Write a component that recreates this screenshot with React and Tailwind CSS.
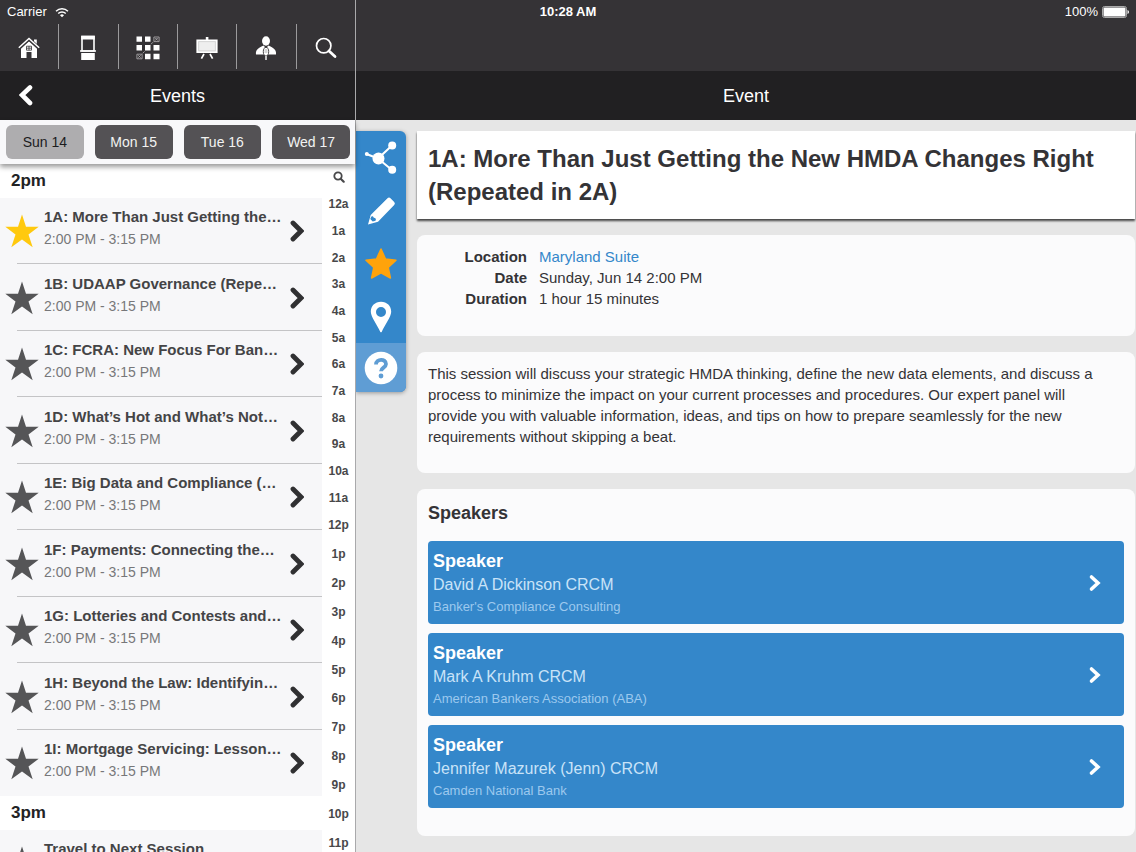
import { useState } from 'react';

const DAYS = ['Sun 14', 'Mon 15', 'Tue 16', 'Wed 17'];

const AM_HOURS = ['12a', '1a', '2a', '3a', '4a', '5a', '6a', '7a', '8a', '9a', '10a', '11a'];
const PM_HOURS = ['12p', '1p', '2p', '3p', '4p', '5p', '6p', '7p', '8p', '9p', '10p', '11p'];

const SECTIONS = [
  {
    label: '2pm',
    events: [
      { title: '1A: More Than Just Getting the…', time: '2:00 PM - 3:15 PM', starred: true },
      { title: '1B: UDAAP Governance (Repe…', time: '2:00 PM - 3:15 PM' },
      { title: '1C: FCRA: New Focus For Ban…', time: '2:00 PM - 3:15 PM' },
      { title: '1D: What’s Hot and What’s Not…', time: '2:00 PM - 3:15 PM' },
      { title: '1E: Big Data and Compliance (…', time: '2:00 PM - 3:15 PM' },
      { title: '1F: Payments: Connecting the…', time: '2:00 PM - 3:15 PM' },
      { title: '1G: Lotteries and Contests and…', time: '2:00 PM - 3:15 PM' },
      { title: '1H: Beyond the Law: Identifyin…', time: '2:00 PM - 3:15 PM' },
      { title: '1I: Mortgage Servicing: Lesson…', time: '2:00 PM - 3:15 PM' },
    ],
  },
  {
    label: '3pm',
    events: [{ title: 'Travel to Next Session', time: '3:15 PM - 3:30 PM' }],
  },
];

const SPEAKERS = [
  { name: 'David A Dickinson CRCM', org: "Banker's Compliance Consulting" },
  { name: 'Mark A Kruhm CRCM', org: 'American Bankers Association (ABA)' },
  { name: 'Jennifer Mazurek (Jenn) CRCM', org: 'Camden National Bank' },
];

function HomeIcon() {
  return (
    <svg width="22" height="22" viewBox="0 0 22 22" fill="none">
      <path d="M3 11.5 11 4l8 7.5V21h-5.500v-6h-5v6H3z" fill="#fff" />
      <path d="M16 2.500h2.800V9L16 6.500z" fill="#fff" />
      <path d="M.8 11.300 11 1.900l10.200 9.400" stroke="#353336" strokeWidth="3.400" />
      <path d="M.8 10.800 11 1.400l10.200 9.400" stroke="#fff" strokeWidth="1.500" />
      <path d="M8.500 9.200h5v4h-5zM11 9v4.200M8.500 11.200h5" stroke="#353336" strokeWidth=".8" />
    </svg>
  );
}

function BoothIcon() {
  return (
    <svg width="18" height="26" viewBox="0 0 18 26" fill="none">
      <path d="M3 1.500h12V16H3z" stroke="#fff" strokeWidth="1.600" />
      <path d="M2.200.7h13.600v3.800H2.200zM1 15.200h16v1.600H1zM2.200 18h13.600v7H2.200z" fill="#fff" />
    </svg>
  );
}

function GridIcon() {
  return (
    <svg width="24" height="24" viewBox="0 0 24 24" fill="#fff">
      <path d="M.5.5H6v5.300H.5zM9 .5h5.500v5.300H9zM.5 9H6v5.500H.5zM9 9h5.500v5.500H9zM17.500 9h6v5.500h-6zM9 17.700h5.500v5.500H9zM17.500 17.700h6v5.500h-6z" />
      <path
        d="M17.900 1h5.200v4.600h-5.200zM.9 18.200h5.200v4.600H.9zM19.300 2l2.400 2.500M21.700 2l-2.400 2.500M2.300 19.300l2.400 2.400M4.700 19.300l-2.400 2.400M17 6.200l-2 2M8.600 15.400l-2 2"
        fill="none"
        stroke="#b5b3b5"
        strokeWidth=".8"
      />
    </svg>
  );
}

function EaselIcon() {
  return (
    <svg width="22" height="24" viewBox="0 0 22 24" fill="none">
      <path d="M9.800 1h2.600v3H9.800z" fill="#fff" />
      <path d="M1.200 4.200h19.600v12H1.200z" fill="#eee" stroke="#fff" strokeWidth="1.600" />
      <path d="M2.600 5.600h16.800v9.200H2.600z" stroke="#ccc" strokeWidth=".7" />
      <path d="m8 18-2.600 4.600M14 18l2.600 4.600" stroke="#fff" strokeWidth="1.700" />
    </svg>
  );
}

function SpeakerIcon() {
  return (
    <svg width="22" height="24" viewBox="0 0 22 24" fill="#fff">
      <ellipse cx="11" cy="5" rx="4" ry="4.700" />
      <path d="M1 18.500c-.5-4 1.500-6.500 7.500-9L11 12l2.500-2.500c6 2.500 8 5 7.500 9z" />
      <ellipse cx="11" cy="15.600" rx="2.700" ry="4.200" stroke="#353336" strokeWidth=".9" />
      <path d="M9.500 14h3M9.500 16h3" stroke="#777" strokeWidth=".6" />
      <path d="M10.300 19.500h1.400V24h-1.400z" />
    </svg>
  );
}

function SearchIcon() {
  return (
    <svg width="22" height="22" viewBox="0 0 22 22" fill="none" stroke="#fff">
      <circle cx="8.700" cy="8.700" r="7.200" strokeWidth="1.700" />
      <path d="m14 14 6 5.500" strokeWidth="2.800" strokeLinecap="round" />
    </svg>
  );
}

const TOOLS = [
  { label: 'Home', icon: HomeIcon },
  { label: 'Exhibitors', icon: BoothIcon },
  { label: 'Floor plan', icon: GridIcon },
  { label: 'Events', icon: EaselIcon },
  { label: 'Speakers', icon: SpeakerIcon },
  { label: 'Search', icon: SearchIcon },
];

function ShareIcon() {
  return (
    <svg width="34" height="34" viewBox="0 0 34 34" fill="#fff">
      <path d="M2.500 13 14 17.500 28 4.500M14 17.500 28 29" fill="none" stroke="#fff" strokeWidth="2" />
      <circle cx="2.800" cy="13" r="2" />
      <circle cx="14.500" cy="17.500" r="6" />
      <circle cx="28.200" cy="4.500" r="4" />
      <circle cx="28.200" cy="28.800" r="4" />
    </svg>
  );
}

function PencilIcon() {
  return (
    <svg width="30" height="30" viewBox="0 0 30 30">
      <path d="m2 28.500 2.700-9.500L21.500 2.300q1.500-1.500 3 0l3.700 3.800q1.400 1.500 0 3L12 25.800z" fill="#fff" />
      <path d="M5 21c.8-1.500 2.500-.9 2.800.8 1.900 0 2.700 1.400 1.700 3l-2.800.8L4.300 23z" fill="#3487ca" />
    </svg>
  );
}

function PinIcon() {
  return (
    <svg width="22" height="32" viewBox="0 0 22 32">
      <path
        d="M11 .8C5 .8.800 5 .800 10.800c0 5 6.800 14 9.400 19.900q.8 1.300 1.600 0c2.600-5.900 9.400-14.900 9.400-19.900C21.200 5 17 .8 11 .8zm0 5.200a5 5 0 1 1 0 10 5 5 0 0 1 0-10z"
        fill="#fff"
        fillRule="evenodd"
      />
    </svg>
  );
}

function HelpIcon() {
  return (
    <svg width="34" height="34" viewBox="0 0 34 34" fill="none">
      <circle cx="17" cy="17" r="16.300" fill="#fff" />
      <path d="M12 13.500c.2-6.200 10-6 10-.5 0 3.700-5 3.600-5 7.300" stroke="#5f9dd4" strokeWidth="3.800" />
      <circle cx="17" cy="25" r="2.400" fill="#5f9dd4" />
    </svg>
  );
}

function StarIcon({ className }) {
  return (
    <svg width="34" height="34" viewBox="0 0 34 34" className={className}>
      <path d="M17 .5 21 12.700h12.700L23.500 20.500 27.700 33.200 17 25.600 6.300 33.200 10.500 20.500.300 12.700H13z" fill="currentColor" />
    </svg>
  );
}

function FavouriteIcon() {
  return (
    <svg width="34" height="34" viewBox="0 0 34 34">
      <path
        d="m17 2 4.500 10 10.500 1.200-7.800 7.300L26.400 31 17 25.800 7.600 31l2.200-10.500L2 13.200 12.500 12z"
        fill="#ffa30b"
        stroke="#ffa30b"
        strokeWidth="1.500"
        strokeLinejoin="round"
      />
    </svg>
  );
}

const ACTIONS = [
  { label: 'Share', icon: ShareIcon },
  { label: 'Notes', icon: PencilIcon },
  { label: 'Favourite', icon: FavouriteIcon },
  { label: 'Map', icon: PinIcon },
  { label: 'Help', icon: HelpIcon },
];

function StatusBar() {
  return (
    <div className="absolute inset-x-0 top-0 grid h-6 grid-cols-3 items-center px-[7px] text-[13px] text-white">
      <div className="flex items-center gap-2">
        <span>Carrier</span>
        <svg width="14" height="11" viewBox="0 0 16 12" fill="none" stroke="#fff" strokeWidth="1.700">
          <path d="M1.200 4.600a9.600 9.600 0 0 1 13.600 0M3.700 7.200a6.100 6.100 0 0 1 8.600 0" />
          <path d="M8 11.300 5.700 9a3.300 3.300 0 0 1 4.600 0z" fill="#fff" stroke="none" />
        </svg>
      </div>
      <div className="text-center font-bold">10:28 AM</div>
      <div className="flex items-center justify-end gap-1">
        <span>100%</span>
        <svg width="27" height="12" viewBox="0 0 27 12" fill="none">
          <rect x=".5" y=".5" width="24" height="11" rx="2" stroke="#aaa" />
          <rect x="1.500" y="1.500" width="22" height="9" rx="1" fill="#fff" />
          <path d="M25.500 4q1.500.5 1.500 2t-1.500 2z" fill="#fff" />
        </svg>
      </div>
    </div>
  );
}

function EventRow({ event, last }) {
  return (
    <li className="flex bg-[#f7f7f9] odd:h-[66px] even:h-[67px]">
      <a href="#event" className="relative flex min-w-0 flex-1 items-center pl-[5px]">
        <StarIcon className={event.starred ? 'shrink-0 text-[#ffc90e]' : 'shrink-0 text-[#555557]'} />
        <span className="ml-[5px] min-w-0 flex-1 pb-1.5">
          <span className="block whitespace-nowrap text-[15px] leading-[22px] font-bold text-[#444446]">{event.title}</span>
          <span className="block text-sm leading-[22px] text-[#77777a]">{event.time}</span>
        </span>
        <svg width="14" height="22" viewBox="0 0 14 22" fill="none" className="mr-[18px] shrink-0">
          <path d="m3 3 8 8-8 8" stroke="#303032" strokeWidth="4.800" strokeLinecap="round" />
        </svg>
        {!last && <span className="absolute right-0 bottom-0 left-[17px] border-b border-[#c4c4c6]" />}
      </a>
    </li>
  );
}

function HourIndex() {
  const groupClass = 'grid shrink-0 auto-rows-fr items-center text-center';
  return (
    <nav aria-label="Jump to hour" className="flex w-[33px] shrink-0 flex-col text-xs font-bold text-[#48484a]">
      <button aria-label="Search events" className="flex h-[27px] shrink-0 items-center justify-center pb-0.5">
        <svg width="12" height="12" viewBox="0 0 12 12" fill="none" stroke="#48484a">
          <circle cx="5" cy="5" r="3.700" strokeWidth="1.800" />
          <path d="m7.700 7.700 3 3" strokeWidth="2.200" strokeLinecap="round" />
        </svg>
      </button>
      <div className={`${groupClass} h-80`}>
        {AM_HOURS.map((h) => <a key={h} href={`#${h}`}>{h}</a>)}
      </div>
      <div className={`${groupClass} h-[346px]`}>
        {PM_HOURS.map((h) => <a key={h} href={`#${h}`}>{h}</a>)}
      </div>
    </nav>
  );
}

function Sidebar() {
  const [day, setDay] = useState(DAYS[0]);

  return (
    <aside className="flex w-[356px] shrink-0 flex-col border-r border-[#a9a9ab] bg-white">
      <nav className="flex h-[71px] shrink-0 bg-[#353336] pt-6 pb-0.5">
        {TOOLS.map(({ label, icon: Icon }) => (
          <button key={label} aria-label={label} className="flex flex-1 items-center justify-center border-r border-[#9b9a9c] pt-0.5 last:border-r-0">
            <Icon />
          </button>
        ))}
      </nav>

      <header className="grid h-[49px] shrink-0 grid-cols-[1fr_auto_1fr] items-center bg-[#212022] text-white">
        <button aria-label="Back" className="ml-[19px] w-4">
          <svg width="16" height="22" viewBox="0 0 16 22" fill="none">
            <path d="m11 2.500-8 7.500 8 8" stroke="#fff" strokeWidth="4.600" strokeLinecap="round" />
          </svg>
        </button>
        <h2 className="text-lg">Events</h2>
      </header>

      <div className="z-10 grid h-11 shrink-0 grid-cols-4 items-center gap-[11px] bg-[#f8f8fa] pr-[5px] pl-1.5 shadow-[0_3px_5px_rgba(0,0,0,0.4)]">
        {DAYS.map((d) => (
          <button
            key={d}
            onClick={() => setDay(d)}
            className={`h-[34px] rounded-md text-sm ${d === day ? 'bg-[#aeadaf] text-[#1c1c1e]' : 'bg-[#545255] text-[#f2f2f2]'}`}
          >
            {d}
          </button>
        ))}
      </div>

      <div className="flex min-h-0 flex-1 overflow-hidden">
        <div className="min-w-0 flex-1">
          {SECTIONS.map((s) => (
            <section key={s.label}>
              <h3 className="flex h-[34px] items-center pl-[11px] text-[17px] font-bold text-[#222224]">{s.label}</h3>
              <ul>
                {s.events.map((e, i) => <EventRow key={e.title} event={e} last={i === s.events.length - 1} />)}
              </ul>
            </section>
          ))}
        </div>
        <HourIndex />
      </div>
    </aside>
  );
}

function SpeakerCard({ speaker }) {
  return (
    <a href="#speaker" className="flex items-center justify-between rounded-[4px] bg-[#3487ca] pt-2 pr-[22px] pb-[7px] pl-[5px]">
      <span>
        <span className="block text-lg leading-6 font-bold text-white">Speaker</span>
        <span className="block text-base leading-6 text-[#c9e3f8]">{speaker.name}</span>
        <span className="block text-[13px] leading-5 text-[#9dc9ee]">{speaker.org}</span>
      </span>
      <svg width="14" height="18" viewBox="0 0 14 18" fill="none">
        <path d="m3.500 3 6.500 6-6.500 6" stroke="#fff" strokeWidth="3.600" strokeLinecap="round" />
      </svg>
    </a>
  );
}

function EventDetail() {
  const cardClass = 'rounded-lg bg-[#fbfbfc] px-[11px]';

  return (
    <main className="flex min-w-0 flex-1 flex-col bg-[#e6e6e6] text-[#343336]">
      <div className="h-[71px] shrink-0 bg-[#353336]" />
      <header className="flex h-[49px] shrink-0 items-center justify-center bg-[#212022] text-lg text-white">Event</header>

      <div className="flex min-h-0 flex-1 gap-[11px] overflow-hidden pt-[11px] pr-px">
        <nav className="flex w-[50px] shrink-0 flex-col self-start overflow-hidden rounded-r-md bg-[#3487ca] shadow-[0_1px_4px_rgba(0,0,0,0.35)]">
          {ACTIONS.map(({ label, icon: Icon }) => (
            <button key={label} aria-label={label} className="flex h-[53px] items-center justify-center last:h-[49px] last:bg-[#5f9dd4]">
              <Icon />
            </button>
          ))}
        </nav>

        <div className="flex min-w-0 flex-1 flex-col gap-4">
          <h1 className="bg-white px-[11px] py-[11px] text-2xl leading-[33px] font-bold shadow-[0_2px_2px_rgba(0,0,0,0.7)]">
            1A: More Than Just Getting the New HMDA Changes Right (Repeated in 2A)
          </h1>

          <dl className={`${cardClass} grid grid-cols-[99px_1fr] gap-x-3 pt-[11px] pb-[27px] text-[15px] leading-[21px]`}>
            <dt className="text-right font-bold">Location</dt>
            <dd><a href="#map" className="text-[#3487ca]">Maryland Suite</a></dd>
            <dt className="text-right font-bold">Date</dt>
            <dd>Sunday, Jun 14 2:00 PM</dd>
            <dt className="text-right font-bold">Duration</dt>
            <dd>1 hour 15 minutes</dd>
          </dl>

          <div className={`${cardClass} pt-[11px] pb-[26px] text-[15px] leading-[21px]`}>
            <p className="pr-4">
              This session will discuss your strategic HMDA thinking, define the new data elements, and discuss a
              process to minimize the impact on your current processes and procedures. Our expert panel will
              provide you with valuable information, ideas, and tips on how to prepare seamlessly for the new
              requirements without skipping a beat.
            </p>
          </div>

          <section className={`${cardClass} pt-3 pb-7`}>
            <h2 className="text-lg leading-6 font-bold">Speakers</h2>
            <div className="mt-4 flex flex-col gap-[9px]">
              {SPEAKERS.map((s) => <SpeakerCard key={s.name} speaker={s} />)}
            </div>
          </section>
        </div>
      </div>
    </main>
  );
}

export default function App() {
  return (
    <div className="relative flex h-screen overflow-hidden font-['Liberation_Sans',Arial,sans-serif]">
      <Sidebar />
      <EventDetail />
      <StatusBar />
    </div>
  );
}
